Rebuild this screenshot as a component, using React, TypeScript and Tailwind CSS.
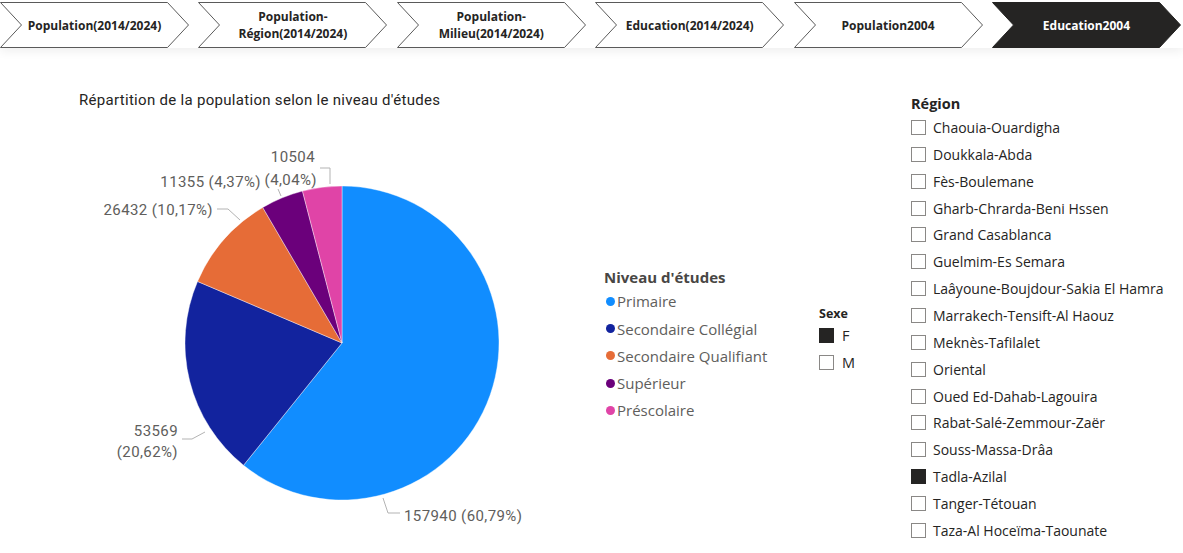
import React from "react";

const tabs = [
  { label: ["Population(2014/2024)"], active: false },
  { label: ["Population-", "Région(2014/2024)"], active: false },
  { label: ["Population-", "Milieu(2014/2024)"], active: false },
  { label: ["Education(2014/2024)"], active: false },
  { label: ["Population2004"], active: false },
  { label: ["Education2004"], active: true },
];

const slices = [
  { name: "Primaire", pct: 60.79, color: "#118DFF" },
  { name: "Secondaire Collégial", pct: 20.62, color: "#12239E" },
  { name: "Secondaire Qualifiant", pct: 10.17, color: "#E66C37" },
  { name: "Supérieur", pct: 4.37, color: "#6B007B" },
  { name: "Préscolaire", pct: 4.05, color: "#E044A7" },
];

const regions = [
  "Chaouia-Ouardigha",
  "Doukkala-Abda",
  "Fès-Boulemane",
  "Gharb-Chrarda-Beni Hssen",
  "Grand Casablanca",
  "Guelmim-Es Semara",
  "Laâyoune-Boujdour-Sakia El Hamra",
  "Marrakech-Tensift-Al Haouz",
  "Meknès-Tafilalet",
  "Oriental",
  "Oued Ed-Dahab-Lagouira",
  "Rabat-Salé-Zemmour-Zaër",
  "Souss-Massa-Drâa",
  "Tadla-Azilal",
  "Tanger-Tétouan",
  "Taza-Al Hoceïma-Taounate",
];

const SEGOE = "font-['Segoe_UI','Open_Sans','Noto_Sans',sans-serif]";

function Chevron({ label, active }: { label: string[]; active: boolean }) {
  return (
    <div className="w-[198.4px] shrink-0">
      <div className="relative w-[189px] h-[46px]">
        <svg className="absolute inset-0" width="189" height="46" viewBox="0 0 189 46">
          <polygon
            points="0.5,0.5 167.5,0.5 188.5,23 167.5,45.5 0.5,45.5 21.5,23"
            fill={active ? "#252423" : "#ffffff"}
            stroke={active ? "#252423" : "#5a5a5a"}
            strokeWidth="1"
          />
        </svg>
        <div
          className={`relative h-full flex flex-col items-center justify-center text-[12px] leading-[17px] font-bold ${SEGOE} ${
            active ? "text-white" : "text-[#252423]"
          }`}
        >
          {label.map((l) => (
            <span key={l}>{l}</span>
          ))}
        </div>
      </div>
    </div>
  );
}

function Pie() {
  const cx = 342;
  const cy = 343;
  const r = 157;
  let acc = 0;
  const paths = slices.map((s) => {
    const a0 = (acc / 100) * Math.PI * 2;
    acc += s.pct;
    const a1 = (Math.min(acc, 100) / 100) * Math.PI * 2;
    const x0 = cx + r * Math.sin(a0);
    const y0 = cy - r * Math.cos(a0);
    const x1 = cx + r * Math.sin(a1);
    const y1 = cy - r * Math.cos(a1);
    const large = a1 - a0 > Math.PI ? 1 : 0;
    return (
      <path
        key={s.name}
        d={`M${cx},${cy} L${x0},${y0} A${r},${r} 0 ${large} 1 ${x1},${y1} Z`}
        fill={s.color}
        stroke="#ffffff"
        strokeWidth="0.4"
      />
    );
  });
  const textCls = "font-['Roboto','DejaVu_Sans',sans-serif] tracking-[0.4px]";
  return (
    <svg width="590" height="433" viewBox="0 120 590 433" className="block">
      {paths}
      <g fill="none" stroke="#b3b3b3" strokeWidth="1">
        <polyline points="320,168 330,168 330,184" />
        <polyline points="278,189 281,196" />
        <polyline points="217,209 228,209 240,220" />
        <polyline points="182,439 192,439 205,432" />
        <polyline points="383,498 388,513 400,513" />
      </g>
      <g fill="#605E5C" fontSize="15" className={textCls}>
        <text x="315" y="162" textAnchor="end">10504</text>
        <text x="317" y="185" textAnchor="end">(4,04%)</text>
        <text x="261" y="187" textAnchor="end">11355 (4,37%)</text>
        <text x="213" y="215" textAnchor="end">26432 (10,17%)</text>
        <text x="178" y="436" textAnchor="end">53569</text>
        <text x="178" y="457" textAnchor="end">(20,62%)</text>
        <text x="404" y="521">157940 (60,79%)</text>
      </g>
    </svg>
  );
}

export default function App() {
  return (
    <div className="w-[1183px] h-[553px] bg-white overflow-hidden relative">
      <div className="h-[48px] bg-white shadow-[0_3px_10px_rgba(0,0,0,0.07)] pt-[2px] flex relative z-10">
        {tabs.map((t) => (
          <Chevron key={t.label.join("")} label={t.label} active={t.active} />
        ))}
      </div>
      <div className="flex h-[505px]">
        <div className="w-[590px] shrink-0">
          <div className="pl-[79px] pt-[44px] h-[72px] text-[15px] leading-[16px] tracking-[0.3px] text-[#252423] font-['Roboto','DejaVu_Sans',sans-serif]">
            Répartition de la population selon le niveau d'études
          </div>
          <Pie />
        </div>
        <div className={`w-[229px] shrink-0 pt-[219px] pl-[14px] ${SEGOE}`}>
          <div className="text-[15px] leading-[20px] font-bold text-[#484644]">Niveau d'études</div>
          <div className="flex flex-col mt-[1px]">
            {slices.map((s) => (
              <div key={s.name} className="h-[27.2px] flex items-center text-[15px] text-[#605E5C]">
                <span
                  className="w-[9px] h-[9px] rounded-full ml-[2px] mr-[2px]"
                  style={{ backgroundColor: s.color }}
                />
                {s.name}
              </div>
            ))}
          </div>
        </div>
        <div className={`w-[92px] shrink-0 pt-[258px] ${SEGOE}`}>
          <div className="text-[12.5px] leading-[16px] font-bold text-[#252423]">Sexe</div>
          <div className="flex flex-col mt-[0px]">
            <div className="h-[27px] flex items-center gap-[8px] text-[14.5px] text-[#252423]">
              <span className="w-[15px] h-[15px] bg-[#252423] border border-[#252423]" />F
            </div>
            <div className="h-[27px] flex items-center gap-[8px] text-[14.5px] text-[#252423]">
              <span className="w-[15px] h-[15px] bg-white border border-[#8a8886]" />M
            </div>
          </div>
        </div>
        <div className={`flex-1 pt-[47px] ${SEGOE}`}>
          <div className="text-[14.5px] leading-[18px] font-bold text-[#252423]">Région</div>
          <div className="flex flex-col mt-[1px]">
            {regions.map((r) => (
              <div key={r} className="h-[26.87px] flex items-center gap-[7px] text-[14px] text-[#252423] whitespace-nowrap">
                <span
                  className={`w-[15px] h-[15px] shrink-0 border ${
                    r === "Tadla-Azilal" ? "bg-[#252423] border-[#252423]" : "bg-white border-[#8a8886]"
                  }`}
                />
                {r}
              </div>
            ))}
          </div>
        </div>
      </div>
    </div>
  );
}
